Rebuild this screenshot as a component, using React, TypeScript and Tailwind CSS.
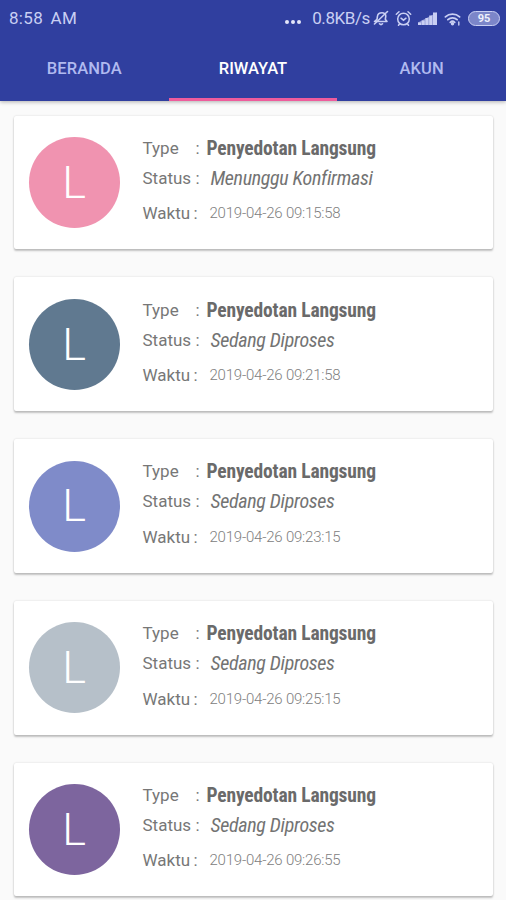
type Order = {
  id: number;
  color: string;
  type: string;
  status: string;
  time: string;
};

const orders: Order[] = [
  { id: 1, color: "bg-[#f093b0]", type: "Penyedotan Langsung", status: "Menunggu Konfirmasi", time: "2019-04-26 09:15:58" },
  { id: 2, color: "bg-[#607990]", type: "Penyedotan Langsung", status: "Sedang Diproses", time: "2019-04-26 09:21:58" },
  { id: 3, color: "bg-[#7f8bc9]", type: "Penyedotan Langsung", status: "Sedang Diproses", time: "2019-04-26 09:23:15" },
  { id: 4, color: "bg-[#b6c0c9]", type: "Penyedotan Langsung", status: "Sedang Diproses", time: "2019-04-26 09:25:15" },
  { id: 5, color: "bg-[#7d659e]", type: "Penyedotan Langsung", status: "Sedang Diproses", time: "2019-04-26 09:26:55" },
];

const tabs = ["BERANDA", "RIWAYAT", "AKUN"];

function BellOffIcon() {
  return (
    <svg className="ml-[3px] h-4 w-4" viewBox="0 0 16 16" fill="none" stroke="currentColor" strokeWidth="1.6" strokeLinecap="round" strokeLinejoin="round">
      <path d="M1.500 11.500h12.500L12.300 9.300 12.800 6C12.800 4 11 2.800 9 2.800S4.800 3.800 4.500 6L4 9.300 1.500 11.500" />
      <path d="M6.500 13.800c.8.8 2.200.8 3 0M14.500 1.500 1.500 14" />
    </svg>
  );
}

function AlarmIcon() {
  return (
    <svg className="ml-1.5 h-[17px] w-[17px]" viewBox="0 0 17 17" fill="none" stroke="currentColor" strokeWidth="1.5" strokeLinecap="round">
      <circle cx="8.500" cy="9" r="5.800" />
      <path d="M1.300 4.200 4 1.800M15.700 4.200 13 1.800M6 8.200l2.500 2 2.500-2M4.500 14l-1 1.300M12.500 14l1 1.300" />
    </svg>
  );
}

function SignalIcon() {
  return (
    <svg className="ml-1.5 h-[14px] w-[19px]" viewBox="0 0 19 14" fill="currentColor">
      <path d="M0 11.500h3V14H0zM3.700 9.500h3V14h-3zM7.400 7h3v7h-3zM11.200 4.500h3V14h-3zM15 1.500h4V14h-4z" />
      <path d="M0 14v-2.500L19 1.500V14z" opacity=".6" />
    </svg>
  );
}

function WifiIcon() {
  return (
    <svg className="mt-[2px] ml-[7px] h-[15px] w-[17px]" viewBox="0 0 17 15" fill="none" stroke="currentColor" strokeWidth="1.800" strokeLinecap="round">
      <path d="M1.400 4.800c4-3.600 10.200-3.600 14.200 0M3.900 7.700c2.600-2.400 6.600-2.400 9.200 0M6.300 10.300c1.200-1.100 3.200-1.100 4.400 0" />
      <circle cx="8.500" cy="11.800" r=".8" fill="currentColor" />
      <path d="M14.800 10v3" strokeWidth="1.400" />
    </svg>
  );
}

function StatusBar() {
  return (
    <div className="flex h-9 items-center pr-[6px] pl-[9px] text-[#c9cff3]">
      <span className="text-[17px] leading-none tracking-[0.3px] [word-spacing:3px]">8:58 AM</span>
      <div className="mt-[7px] ml-auto flex gap-[2px]">
        <i className="h-[4px] w-[4px] rounded-full bg-[#e4e7fa]" />
        <i className="h-[4px] w-[4px] rounded-full bg-[#e4e7fa]" />
        <i className="h-[4px] w-[4px] rounded-full bg-[#e4e7fa]" />
      </div>
      <span className="ml-[11px] text-[17px] leading-none tracking-[-0.4px]">0.8KB/s</span>
      <BellOffIcon />
      <AlarmIcon />
      <SignalIcon />
      <WifiIcon />
      <span className="ml-[7px] flex h-[15px] w-[32px] items-center justify-center rounded-full border-[1.5px] border-[#c9cff3] bg-[#7c86c9] text-[11px] leading-none font-bold text-[#eef0fc]">
        95
      </span>
    </div>
  );
}

function OrderCard({ order }: { order: Order }) {
  return (
    <article className="flex h-[133.800px] shrink-0 rounded-[2px] bg-white pl-[14.500px] shadow-[0_2px_2px_rgba(0,0,0,0.22),0_0_2px_rgba(0,0,0,0.16)]">
      <div className={`mt-[21.500px] flex h-[91px] w-[91px] items-center justify-center rounded-full text-[45px] font-light text-white ${order.color}`}>
        L
      </div>
      <dl className="mt-[20.300px] ml-[23px] grid grid-cols-[68px_1fr] grid-rows-[24px_35.500px_34px] text-[17px] leading-6 text-[#777]">
        <dt className="flex w-[57px] justify-between">
          <span>Type</span>
          <span>:</span>
        </dt>
        <dd className="mt-px -ml-1 font-['Roboto_Condensed',Roboto,sans-serif] text-[19.500px] font-bold tracking-[-0.150px] whitespace-nowrap text-[#6a6a6a]">
          {order.type}
        </dd>
        <dt className="mt-[6px] flex w-[57px] justify-between">
          <span>Status</span>
          <span>:</span>
        </dt>
        <dd className="mt-[6px] font-['Roboto_Condensed',Roboto,sans-serif] text-[20px] tracking-[-0.320px] whitespace-nowrap text-[#737373] italic">
          {order.status}
        </dd>
        <dt className="mt-[6px] flex w-[55px] justify-between">
          <span>Waktu</span>
          <span>:</span>
        </dt>
        <dd className="mt-[6px] -ml-[1px] text-[15px] font-light tracking-[-0.220px] whitespace-nowrap text-[#808080]">{order.time}</dd>
      </dl>
    </article>
  );
}

export default function App() {
  return (
    <div className="flex h-[900px] w-[506px] flex-col overflow-hidden bg-[#fafafa] font-[Roboto,sans-serif]">
      <header className="z-10 h-[101px] shrink-0 bg-[#303f9f] shadow-[0_1px_4px_rgba(0,0,0,0.3)]">
        <StatusBar />
        <nav className="grid h-[65px] grid-cols-3">
          {tabs.map((tab) => (
            <a
              key={tab}
              className={
                tab === "RIWAYAT"
                  ? "flex items-center justify-center border-b-[3px] border-[#ee5c9c] pt-[5px] text-[16.500px] font-medium text-white"
                  : "flex items-center justify-center border-b-[3px] border-transparent pt-[5px] text-[16.500px] font-medium tracking-[0.1px] text-[#b0baf0]"
              }
            >
              {tab}
            </a>
          ))}
        </nav>
      </header>
      <main className="flex flex-col gap-7 pt-[14.500px] pr-[13px] pl-[14px]">
        {orders.map((order) => (
          <OrderCard key={order.id} order={order} />
        ))}
      </main>
    </div>
  );
}
